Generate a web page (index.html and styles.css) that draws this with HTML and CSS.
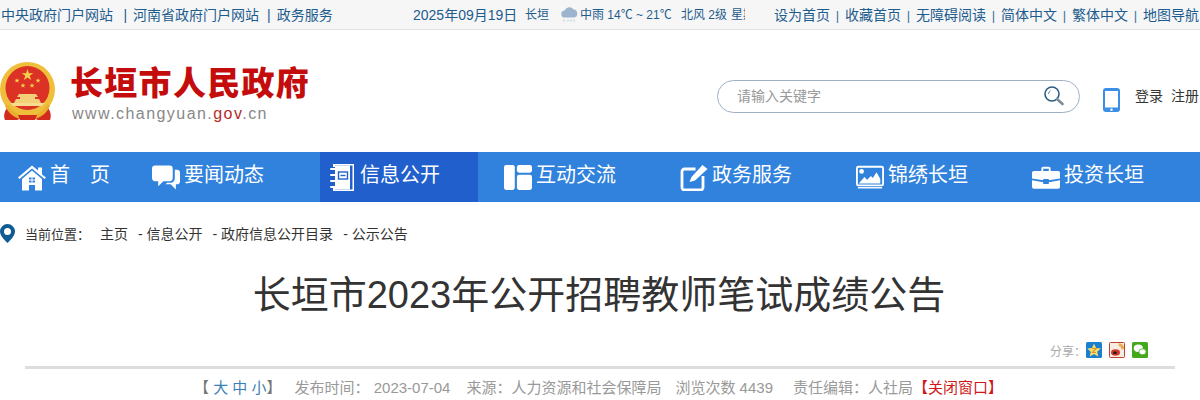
FILE: index.html
```html
<!DOCTYPE html>
<html lang="zh-CN">
  <head>
    <meta charset="UTF-8" />
    <meta name="viewport" content="width=device-width, initial-scale=1.0" />
    <title>长垣市2023年公开招聘教师笔试成绩公告</title>
    <link rel="stylesheet" href="styles.css">
  </head>
  <body>
    <div class="topbar">
      <div class="top-left">
        <a>中央政府门户网站</a><span class="sep-left">|</span><a>河南省政府门户网站</a><span class="sep-left">|</span><a>政务服务</a>
      </div>
      <div class="top-mid">
        <span class="date">2025年09月19日</span>
        <span class="city">长垣</span>
        <svg class="cloud" viewBox="0 0 17 16">
          <path d="M4 11.5a3.5 3.5 0 0 1-.3-7A5 5 0 0 1 12.6 3.600a4 4 0 0 1 .4 7.900z" fill="#9cb4cd"/>
          <path d="M3 13.500v2M7 13.500v2M10 13.500v2M13 13.500v2" stroke="#b4c4d4" stroke-width="1"/>
        </svg>
        <span class="weather">中雨 14℃ ~ 21℃</span>
        <span class="wind">北风 2级</span>
        <span class="week">星期五</span>
      </div>
      <div class="top-right">
        <a>设为首页</a><span class="sep">|</span><a>收藏首页</a><span class="sep">|</span><a>无障碍阅读</a><span class="sep">|</span><a>简体中文</a><span class="sep">|</span><a>繁体中文</a><span class="sep">|</span><a>地图导航</a>
      </div>
    </div>

    <div class="header">
      <svg class="emblem" viewBox="0 0 55 60">
        <path d="M8 45c-3 3-5 8-3 13h12l5-2h11l5 2h12c2-5 0-10-3-13z" fill="#d42a1e"/>
        <circle cx="27.500" cy="27.500" r="27.500" fill="#efbf3c"/>
        <circle cx="27.500" cy="26" r="22" fill="#dc3225"/>
        <path d="M27.500 7l1.400 4.200h4.400l-3.600 2.600 1.400 4.200-3.600-2.600-3.600 2.600 1.400-4.200-3.600-2.600h4.400z" fill="#f6d24a"/>
        <path d="M17 16l.6 1.800h1.900l-1.500 1.100.6 1.800-1.600-1.100-1.600 1.100.6-1.800-1.500-1.100h1.900zM38 16l.6 1.800h1.900l-1.500 1.100.6 1.800-1.600-1.100-1.600 1.100.6-1.800-1.500-1.100h1.900zM23 21l.6 1.800h1.900l-1.500 1.100.6 1.800-1.600-1.100-1.600 1.100.6-1.800-1.500-1.100h1.900zM32 21l.6 1.800h1.900l-1.500 1.100.6 1.800-1.600-1.100-1.600 1.100.6-1.800-1.500-1.100h1.900z" fill="#f6d24a"/>
        <path d="M19 32h17l2 3h-3v2h4l2 4H14l2-4h4v-2h-3z" fill="#f3cf78"/>
        <path d="M10 41h35l-3 3H13z" fill="#f6dc8f"/>
        <path d="M7 42c6 9 14 12 20.500 12S42 51 48 42l2 2c-4 9-13 14-22.500 14S9 53 5 44z" fill="#e9b02f"/>
        <path d="M18 53h19l-2 5H20z" fill="#d42a1e"/>
      </svg>
      <div class="logo">
        <p class="logo-name">长垣市人民政府</p>
        <p class="logo-url">www.changyuan.<span>gov</span>.cn</p>
      </div>
      <div class="search">
        <span class="search-text">请输入关键字</span>
        <svg class="search-icon" viewBox="0 0 20 20">
          <circle cx="8" cy="8" r="7" fill="#fff" stroke="#2d5f86" stroke-width="1.600"/>
          <path d="M4.500 8a3.500 3.500 0 0 1 2-3.200" fill="none" stroke="#5c86a6" stroke-width="1"/>
          <path d="M13 13l5.500 5" stroke="#7d8c99" stroke-width="2.600" stroke-linecap="round"/>
        </svg>
      </div>
      <svg class="phone" viewBox="0 0 17 24">
        <rect width="17" height="24" rx="3" fill="#3b8fe6"/>
        <rect x="2" y="3" width="13" height="16.500" fill="#fff"/>
        <circle cx="8.500" cy="21.700" r="1.200" fill="#fff"/>
      </svg>
      <div class="account"><a>登录</a><a>注册</a></div>
    </div>

    <div class="nav">
      <a class="nav-item">
        <svg class="nav-icon" viewBox="0 0 28 26">
          <path d="M0 13L14 1l6 5V3h4v7l4 3-1.500 1.500L14 4 1.500 14.500z" fill="#fff"/>
          <path fill-rule="evenodd" d="M4 14.500L14 6l10 8.500V26H4zM11 13v5h6v-5zM11 20.500V26h6v-5.500z" fill="#fff"/>
          <path d="M14 13v5M11 15.500h6" stroke="#fff" stroke-width="1"/>
        </svg>
        <span>首　页</span>
      </a>
      <a class="nav-item">
        <svg class="nav-icon" viewBox="0 0 27 23">
          <path d="M3 0h14a3 3 0 0 1 3 3v9a3 3 0 0 1-3 3h-6l-5 5v-5H3a3 3 0 0 1-3-3V3a3 3 0 0 1 3-3z" fill="#fff"/>
          <path d="M22 4h2a3 3 0 0 1 3 3v8a3 3 0 0 1-3 3h-1v5l-5-5h-5l1.500-1.500H18a4 4 0 0 0 4-4z" fill="#fff"/>
        </svg>
        <span>要闻动态</span>
      </a>
      <a class="nav-item nav-active">
        <svg class="nav-icon" viewBox="0 0 24 27">
          <path fill-rule="evenodd" d="M3 0h21v27H3v-3h2v1.500h17.500V1.500H5V3H3z" fill="#fff"/>
          <rect x="5" y="1.500" width="15" height="24" fill="#fff"/>
          <rect x="8.500" y="8" width="9" height="7" fill="none" stroke="#2160cc" stroke-width="1.400"/>
          <path d="M10.500 11.500h5" stroke="#2160cc" stroke-width="1.400"/>
          <path d="M1 5h5M1 11h5M1 17h5M1 23h5" stroke="#fff" stroke-width="2" stroke-linecap="round"/>
        </svg>
        <span>信息公开</span>
      </a>
      <a class="nav-item">
        <svg class="nav-icon" viewBox="0 0 26 23">
          <rect width="10" height="23" rx="2" fill="#fff"/>
          <rect x="12" width="14" height="7" rx="2" fill="#fff"/>
          <rect x="12" y="9" width="14" height="14" rx="2" fill="#fff"/>
        </svg>
        <span>互动交流</span>
      </a>
      <a class="nav-item">
        <svg class="nav-icon" viewBox="0 0 27 27">
          <path d="M15 5H4a2.500 2.500 0 0 0-2.500 2.500v16A2.500 2.500 0 0 0 4 26h16a2.500 2.500 0 0 0 2.500-2.500V12" fill="none" stroke="#fff" stroke-width="2.800"/>
          <path d="M9 18l2-5L22 1 27 5 14.500 16.500z" fill="#fff"/>
        </svg>
        <span>政务服务</span>
      </a>
      <a class="nav-item">
        <svg class="nav-icon" viewBox="0 0 30 25">
          <rect x="1" y="1" width="28" height="20" rx="1.500" fill="none" stroke="#fff" stroke-width="2"/>
          <circle cx="6" cy="6" r="2.500" fill="#fff"/>
          <path d="M3 19l6-7 3 3 4-4 2 2 4-6 4 7v5z" fill="#fff"/>
          <path d="M2 23.500h26" stroke="#fff" stroke-width="1.500"/>
        </svg>
        <span>锦绣长垣</span>
      </a>
      <a class="nav-item">
        <svg class="nav-icon" viewBox="0 0 30 24">
          <path fill-rule="evenodd" d="M10 6V2.500A2 2 0 0 1 12 .500h6a2 2 0 0 1 2 2V6h-2V2.500h-6V6z" fill="#fff"/>
          <path d="M2 5h26a2 2 0 0 1 2 2v6l-12 2v-1.500h-6V15L0 13V7a2 2 0 0 1 2-2z" fill="#fff"/>
          <path d="M0 15l12 2v2h6v-2l12-2v7a2 2 0 0 1-2 2H2a2 2 0 0 1-2-2z" fill="#fff"/>
        </svg>
        <span>投资长垣</span>
      </a>
    </div>

    <div class="crumb">
      <svg class="pin" viewBox="0 0 15 19">
        <path fill-rule="evenodd" d="M7.500 0A7.500 7.500 0 0 1 15 7.500c0 4-4 8-7.500 11.500C4 15.500 0 11.500 0 7.500A7.500 7.500 0 0 1 7.500 0zm0 4a3.500 3.500 0 1 0 0 7 3.500 3.500 0 0 0 0-7z" fill="#0f5c94"/>
      </svg>
      <span class="crumb-label">当前位置：</span>
      <a>主页</a>
      <a>- 信息公开</a>
      <a>- 政府信息公开目录</a>
      <a>- 公示公告</a>
    </div>

    <h1 class="title">长垣市2023年公开招聘教师笔试成绩公告</h1>

    <div class="share">
      <span>分享：</span>
      <svg class="share-icon" viewBox="0 0 16 16">
        <rect width="16" height="16" rx="1.500" fill="#1b7fd0"/>
        <path d="M8 1.500l2 4.500 4.800.5-3.600 3.200 1 4.800L8 12l-4.200 2.500 1-4.800L1.200 6.500 6 6z" fill="#f8df6a"/>
        <path d="M6 6.500h4L6.500 10.500H10" fill="none" stroke="#e8932a" stroke-width="1.200"/>
      </svg>
      <svg class="share-icon" viewBox="0 0 16 16">
        <rect x=".5" y=".5" width="15" height="15" rx="1" fill="#f7ece0" stroke="#b9432f"/>
        <ellipse cx="6.500" cy="10.500" rx="4.500" ry="3.300" fill="#d8372a"/>
        <ellipse cx="6" cy="10.800" rx="2" ry="1.500" fill="#222"/>
        <path d="M9.500 3.500a3.500 3.500 0 0 1 3.500 4M9.500 1.800a5 5 0 0 1 5 5" fill="none" stroke="#ec9a35" stroke-width="1.200"/>
      </svg>
      <svg class="share-icon" viewBox="0 0 16 16">
        <rect width="16" height="16" rx="1.500" fill="#44a81d"/>
        <ellipse cx="6.300" cy="6.300" rx="4.500" ry="3.700" fill="#fff"/>
        <ellipse cx="10.500" cy="9.800" rx="3.700" ry="3" fill="#fff" stroke="#44a81d" stroke-width=".8"/>
      </svg>
    </div>
    <div class="rule"></div>

    <div class="meta">
      <span class="font-size">【 <a>大</a> <a>中</a> <a>小</a>】</span>
      <span>发布时间： 2023-07-04</span>
      <span class="source">来源：人力资源和社会保障局</span>
      <span class="views">浏览次数 4439</span>
      <span class="editor">责任编辑：人社局</span>
      <a class="close">【关闭窗口】</a>
    </div>
  </body>
</html>
```

FILE: styles.css
```css
body {
  margin: 0;
  font-family: "Liberation Sans", "Noto Sans CJK SC", sans-serif;
  background-color: #fff;
  overflow: hidden;
}

p {
  margin: 0;
}

.topbar {
  display: grid;
  grid-template-columns: 413px 361px 1fr;
  align-items: center;
  height: 27px;
  padding-bottom: 2px;
  background-color: #f6f6f6;
  border-bottom: 1px solid #e2e2e2;
  color: #1d5c8e;
  font-size: 14px;
  white-space: nowrap;
}

.top-left {
  padding-left: 1px;
}

.top-left a:first-child {
  margin-right: 2.400px;
}

.sep-left {
  margin: 0 6px 0 8px;
}

.top-mid {
  display: flex;
  align-items: center;
  font-size: 12px;
}

.date {
  font-size: 14px;
  width: 112px;
}

.city {
  width: 36px;
}

.cloud {
  width: 17px;
  height: 16px;
  margin-right: 2px;
}

.weather {
  width: 101px;
}

.wind {
  width: 50px;
}

.week {
  width: 14px;
  overflow: hidden;
}

.sep {
  margin: 0 5.800px;
  color: #3d7299;
  font-size: 13px;
}

.header {
  display: flex;
  align-items: center;
  height: 122px;
}

.emblem {
  width: 55px;
  height: 60px;
  margin-top: 2px;
}

.logo {
  margin: 6px 0 0 15px;
  width: 647px;
}

.logo-name {
  color: #c40c0c;
  font-size: 33px;
  font-weight: 900;
  letter-spacing: 1.300px;
  line-height: 40px;
}

.logo-url {
  padding-left: 2px;
  color: #888;
  font-size: 16px;
  letter-spacing: 1.450px;
  line-height: 20px;
}

.logo-url span {
  color: #b52a2a;
}

.search {
  display: flex;
  align-items: center;
  justify-content: space-between;
  box-sizing: border-box;
  width: 363px;
  height: 33px;
  margin-top: 10px;
  padding: 0 15px 0 19px;
  border: 1px solid #9fb0c2;
  border-radius: 17px;
  color: #999;
  font-size: 14px;
}

.search-text {
  margin-top: -3px;
}

.search-icon {
  width: 20px;
  height: 20px;
}

.phone {
  width: 17px;
  height: 24px;
  margin: 18px 0 0 23px;
}

.account {
  display: flex;
  gap: 8px;
  margin: 7px 0 0 15px;
  color: #333;
  font-size: 14px;
  white-space: nowrap;
}

.nav {
  display: flex;
  gap: 18px;
  height: 50px;
  padding-left: 10px;
  background-color: #3182dd;
  color: #fff;
  font-size: 20px;
  white-space: nowrap;
}

.nav-item {
  display: flex;
  align-items: center;
  box-sizing: border-box;
  width: 158px;
  padding-left: 8px;
}

.nav-item:first-child {
  width: 116px;
}

.nav-item span {
  margin-top: -8px;
}

.nav-active {
  background-color: #2160cc;
}

.nav-icon {
  flex: none;
  width: 32px;
  height: 27px;
  padding-right: 4px;
  box-sizing: border-box;
}

.crumb {
  display: flex;
  align-items: center;
  height: 62px;
  color: #333;
  font-size: 14px;
  white-space: nowrap;
}

.pin {
  width: 15px;
  height: 19px;
  margin-right: 10px;
}

.crumb-label {
  width: 75px;
  font-size: 13px;
}

.crumb a {
  margin-right: 10px;
}

.title {
  margin: 0;
  padding: 3px 2px 0 0;
  color: #333;
  font-size: 38px;
  font-weight: 400;
  line-height: 56px;
  text-align: center;
}

.share {
  display: flex;
  justify-content: flex-end;
  align-items: center;
  gap: 7px;
  height: 16px;
  margin-top: 19px;
  padding-right: 52px;
  color: #aaa;
  font-size: 12px;
}

.share-icon {
  width: 16px;
  height: 16px;
}

.share span {
  margin-right: -7px;
}

.rule {
  height: 3px;
  margin: 8px 25px 0;
  background-color: #ddd;
}

.meta {
  display: flex;
  justify-content: center;
  gap: 16px;
  margin-top: 10px;
  padding-right: 3px;
  color: #999;
  font-size: 15px;
  line-height: 18px;
  white-space: nowrap;
}

.font-size {
  margin-right: -3px;
  color: #777;
}

.font-size a {
  color: #3a7fb5;
}

.source {
  margin-right: -2px;
}

.views {
  margin-right: 4px;
}

.editor {
  margin-right: -16px;
}

.close {
  color: #d01818;
}
```
